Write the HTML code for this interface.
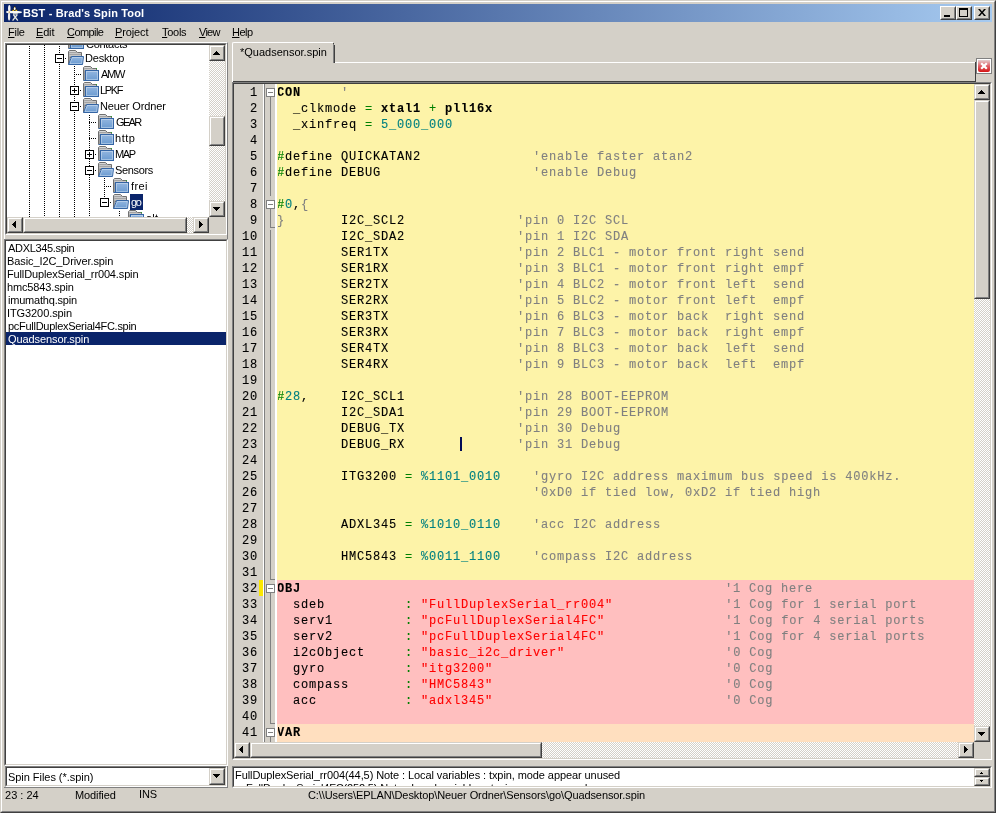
<!DOCTYPE html>
<html><head><meta charset="utf-8"><title>BST - Brad's Spin Tool</title>
<style>
*{box-sizing:border-box;margin:0;padding:0}
html,body{width:996px;height:813px;overflow:hidden;background:#d4d0c8}
body{position:relative;font-family:"Liberation Sans",sans-serif;font-size:11px;color:#000;line-height:13px}
.a{position:absolute}
/* window frame */
#fr1{left:0;top:0;width:996px;height:813px;border:1px solid;border-color:#d4d0c8 #404040 #404040 #d4d0c8}
#fr2{left:1px;top:1px;width:994px;height:811px;border:1px solid;border-color:#fff #808080 #808080 #fff}
#title{left:4px;top:4px;width:988px;height:18px;background:linear-gradient(to right,#0a246a 0%,#a6caf0 100%)}
#ttext{left:23px;top:6px;color:#fff;font-weight:bold;font-size:11px;line-height:14px;white-space:nowrap}
.tb{position:absolute;top:6px;width:16px;height:14px;background:#d4d0c8;border:1px solid;border-color:#fff #404040 #404040 #fff}
.tb:before{content:"";position:absolute;left:0;top:0;right:0;bottom:0;border:1px solid;border-color:#d4d0c8 #808080 #808080 #d4d0c8}
.mi{position:absolute;top:26px;line-height:13px;white-space:nowrap}
.mi u{text-decoration:underline}
/* sunken box */
.sunk{position:absolute;border:1px solid;border-color:#808080 #fff #fff #808080;background:#fff}
.sunk:before{content:"";position:absolute;left:0;top:0;right:0;bottom:0;border:1px solid;border-color:#404040 #d4d0c8 #d4d0c8 #404040;pointer-events:none;z-index:5}
.in{position:absolute;left:1px;top:1px;right:1px;bottom:1px;overflow:hidden}
/* scrollbars */
.sb{position:absolute;background-color:#fff;background-image:linear-gradient(45deg,#d4d0c8 25%,transparent 25%,transparent 75%,#d4d0c8 75%),linear-gradient(45deg,#d4d0c8 25%,transparent 25%,transparent 75%,#d4d0c8 75%);background-size:2px 2px;background-position:0 0,1px 1px}
.btn{position:absolute;background:#d4d0c8;border:1px solid;border-color:#d4d0c8 #404040 #404040 #d4d0c8}
.btn:before{content:"";position:absolute;left:0;top:0;right:0;bottom:0;border:1px solid;border-color:#fff #808080 #808080 #fff}
.ar{position:absolute;width:0;height:0;border:4px solid transparent}
.ar.up{border-top:0;border-bottom:4px solid #000;left:4px;top:5px}
.ar.dn{border-bottom:0;border-top:4px solid #000;left:4px;top:6px}
.ar.lf{border-left:0;border-right:4px solid #000;left:5px;top:4px}
.ar.rt{border-right:0;border-left:4px solid #000;left:6px;top:4px}
/* tree */
.ic{position:absolute}
.tl{position:absolute;height:13px;line-height:13px;padding:0 2px;white-space:nowrap}
.tl.sel{background:#0a246a;color:#fff}
.bx{position:absolute;width:9px;height:9px;border:1px solid #000;background:#fff}
.bx .h{position:absolute;left:1px;top:3px;width:5px;height:1px;background:#000}
.bx .v{position:absolute;left:3px;top:1px;width:1px;height:5px;background:#000}
.hd{position:absolute;height:1px;background-image:linear-gradient(to right,#000 50%,transparent 50%);background-size:2px 1px}
.vd{position:absolute;width:1px;background-image:linear-gradient(to bottom,#000 50%,transparent 50%);background-size:1px 2px}
/* file list */
.fl{position:absolute;left:0;width:100%;height:13px;line-height:13px;padding-left:1px;white-space:nowrap}
.fl.sel{background:#0a246a;color:#fff}
/* editor */
#code{position:absolute;left:45px;top:0;width:700px;height:656px;background:#fdf3a8}
.ln{position:absolute;left:-1px;height:16px;line-height:16px;padding-top:1px;will-change:transform;white-space:pre;font-family:"Liberation Mono",monospace;font-size:12px;letter-spacing:0.8px;color:#000;-webkit-text-stroke:0.12px}
.no{position:absolute;left:0;width:24px;height:16px;line-height:16px;padding-top:1px;will-change:transform;text-align:right;font-family:"Liberation Mono",monospace;font-size:12px;letter-spacing:0.8px;color:#000;-webkit-text-stroke:0.12px}
.k{font-weight:bold}
.c{color:#808080}
.o{color:#008000}
.t{color:#008080}
.s{color:#ff0000}
.fb{position:absolute;left:32px;width:9px;height:9px;border:1px solid #808080;background:#fff}
.fb i{position:absolute;left:1px;top:3px;width:5px;height:1px;background:#808080}
.tx{position:absolute;height:13px;line-height:13px;white-space:pre;font-size:11px;will-change:transform}
</style></head><body>
<svg width="0" height="0" style="position:absolute"><defs><linearGradient id="gb" x1="0" y1="0" x2="0" y2="1"><stop offset="0" stop-color="#93b6df"/><stop offset="1" stop-color="#6b9bd1"/></linearGradient></defs></svg>
<div class="a" id="fr1"></div><div class="a" id="fr2"></div>
<div class="a" id="title"></div>
<svg class="a" style="left:4px;top:4px" width="20" height="18" viewBox="4 4 20 18">
<ellipse cx="9.3" cy="8.6" rx="1.25" ry="3.6" fill="#f4f4f4"/>
<ellipse cx="9.1" cy="16.6" rx="1.15" ry="4.1" fill="#ececec"/>
<path d="M6 12Q6 11 8 11H18Q22 11.2 22 12.2Q22 13 19 13.2H8Q6 13 6 12Z" fill="#fbfbf6"/>
<path d="M12.8 13.2H18L17.2 14.6H13.4Z" fill="#e8e8e0"/>
<path d="M13.3 14.5L17.8 20.6M17.3 14.5L12.6 20.6" stroke="#e6e6de" stroke-width="1.3" fill="none"/>
<path d="M14.7 5.6L17.4 10.6H12Z" fill="#101010"/>
<ellipse cx="14.7" cy="8.6" rx="0.95" ry="1.7" fill="#fff"/>
<rect x="12.4" y="9.8" width="1.8" height="1.2" fill="#f0c020"/><rect x="15.4" y="9.8" width="1.8" height="1.2" fill="#f0c020"/>
<rect x="14.2" y="6.8" width="1" height="0.8" fill="#e8b020"/>
<circle cx="9.3" cy="12.1" r="0.9" fill="#d8b070"/>
</svg>
<div class="tx" style="left:23px;top:7px;letter-spacing:0.152px;color:#fff;font-weight:bold">BST - Brad's Spin Tool</div>
<div class="tb" style="left:940px"><div class="a" style="left:3px;top:8px;width:6px;height:2px;background:#000"></div></div>
<div class="tb" style="left:956px"><div class="a" style="left:2px;top:1px;width:9px;height:9px;border:1px solid #000;border-top-width:2px"></div></div>
<div class="tb" style="left:974px"><svg class="a" style="left:3px;top:2px" width="8" height="7" viewBox="0 0 8 7"><path d="M0 0h2l2 2.5L6 0h2L5 3.5L8 7H6L4 4.5L2 7H0l3-3.5Z" fill="#000"/></svg></div>
<!-- menu -->
<div class="tx" style="left:8px;top:26px;letter-spacing:-0.267px;"><u>F</u>ile</div>
<div class="tx" style="left:36px;top:26px;letter-spacing:-0.167px;"><u>E</u>dit</div>
<div class="tx" style="left:67px;top:26px;letter-spacing:-0.583px;"><u>C</u>ompile</div>
<div class="tx" style="left:115px;top:26px;letter-spacing:-0.117px;"><u>P</u>roject</div>
<div class="tx" style="left:162px;top:26px;letter-spacing:-0.275px;"><u>T</u>ools</div>
<div class="tx" style="left:199px;top:26px;letter-spacing:-0.733px;"><u>V</u>iew</div>
<div class="tx" style="left:232px;top:26px;letter-spacing:-0.533px;"><u>H</u>elp</div>

<!-- tree panel -->
<div class="a" style="left:4px;top:42px;width:224px;height:197px;border-left:1px solid #fff;border-top:1px solid #fff;border-right:1px solid #808080"></div>
<div class="sunk" style="left:5px;top:43px;width:222px;height:192px"><div class="in" id="tree">
<div class="vd" style="left:22px;top:0;height:172px;background-position:0 1px"></div>
<div class="vd" style="left:37px;top:0;height:172px"></div>
<div class="vd" style="left:52px;top:0;height:172px;background-position:0 1px"></div>
<div class="vd" style="left:67px;top:21px;height:151px"></div>
<div class="vd" style="left:82px;top:69px;height:103px;background-position:0 1px"></div>
<div class="vd" style="left:97px;top:133px;height:20px"></div>
<div class="vd" style="left:112px;top:165px;height:7px;background-position:0 1px"></div>
<svg class="ic" style="left:61px;top:-11px" width="16" height="16" viewBox="0 0 16 16">
<path d="M0.5 14.5V1.5L1.5 0.5H7.5L9.5 2.5H13.5V5.5H0.5" fill="#b8b8b8" stroke="#707070"/>
<path d="M1.5 1.5H7.5" stroke="#d8d8d8"/><path d="M1.5 2.5H8.5M1.5 4.5H3" stroke="#a4a4a4"/><path d="M1.5 3.5H13" stroke="#c8c8c8"/>
<path d="M1.5 5V14" stroke="#9c9c9c"/>
<rect x="13" y="2" width="1" height="1" fill="#2ea82e"/>
<rect x="2.5" y="4.5" width="13" height="10" fill="url(#gb)" stroke="#3465a4"/>
<rect x="3.5" y="5.5" width="11" height="8" fill="none" stroke="#fff" stroke-opacity="0.35"/>
<path d="M0.5 14.5H15.5" stroke="#3465a4"/>
</svg>
<div class="tx" style="left:79px;top:-7px;letter-spacing:-0.286px;">Contacts</div>
<div class="hd" style="left:52px;top:-3px;width:8px"></div>
<svg class="ic" style="left:61px;top:5px" width="16" height="16" viewBox="0 0 16 16">
<path d="M0.5 14.5V1.5L1.5 0.5H7.5L9.5 2.5H13.5V7.5H0.5" fill="#b8b8b8" stroke="#707070"/>
<path d="M1.5 1.5H7.5" stroke="#d8d8d8"/><path d="M1.5 2.5H8.5M1.5 4.5H13M1.5 6.5H3" stroke="#a4a4a4"/><path d="M1.5 3.5H13M1.5 5.5H13" stroke="#c8c8c8"/>
<path d="M1.5 7V13" stroke="#9c9c9c"/>
<path d="M3.5 6.5H15.5L14.5 14.5H0.5L2 11Z" fill="url(#gb)" stroke="#3465a4"/>
<path d="M4.3 7.5H14.4L13.6 13.5H2L2.9 11Z" fill="none" stroke="#fff" stroke-opacity="0.35"/>
</svg>
<div class="tx" style="left:78px;top:7px;letter-spacing:-0.183px;">Desktop</div>
<div class="bx" style="left:48px;top:9px"><i class="h"></i></div>
<div class="hd" style="left:58px;top:13px;width:2px"></div>
<svg class="ic" style="left:76px;top:21px" width="16" height="16" viewBox="0 0 16 16">
<path d="M0.5 14.5V1.5L1.5 0.5H7.5L9.5 2.5H13.5V5.5H0.5" fill="#b8b8b8" stroke="#707070"/>
<path d="M1.5 1.5H7.5" stroke="#d8d8d8"/><path d="M1.5 2.5H8.5M1.5 4.5H3" stroke="#a4a4a4"/><path d="M1.5 3.5H13" stroke="#c8c8c8"/>
<path d="M1.5 5V14" stroke="#9c9c9c"/>
<rect x="13" y="2" width="1" height="1" fill="#2ea82e"/>
<rect x="2.5" y="4.5" width="13" height="10" fill="url(#gb)" stroke="#3465a4"/>
<rect x="3.5" y="5.5" width="11" height="8" fill="none" stroke="#fff" stroke-opacity="0.35"/>
<path d="M0.5 14.5H15.5" stroke="#3465a4"/>
</svg>
<div class="tx" style="left:94px;top:23px;letter-spacing:-1.300px;">AMW</div>
<div class="hd" style="left:67px;top:29px;width:8px"></div>
<svg class="ic" style="left:76px;top:37px" width="16" height="16" viewBox="0 0 16 16">
<path d="M0.5 14.5V1.5L1.5 0.5H7.5L9.5 2.5H13.5V5.5H0.5" fill="#b8b8b8" stroke="#707070"/>
<path d="M1.5 1.5H7.5" stroke="#d8d8d8"/><path d="M1.5 2.5H8.5M1.5 4.5H3" stroke="#a4a4a4"/><path d="M1.5 3.5H13" stroke="#c8c8c8"/>
<path d="M1.5 5V14" stroke="#9c9c9c"/>
<rect x="13" y="2" width="1" height="1" fill="#2ea82e"/>
<rect x="2.5" y="4.5" width="13" height="10" fill="url(#gb)" stroke="#3465a4"/>
<rect x="3.5" y="5.5" width="11" height="8" fill="none" stroke="#fff" stroke-opacity="0.35"/>
<path d="M0.5 14.5H15.5" stroke="#3465a4"/>
</svg>
<div class="tx" style="left:93px;top:39px;letter-spacing:-1.333px;">LPKF</div>
<div class="bx" style="left:63px;top:41px"><i class="h"></i><i class="v"></i></div>
<div class="hd" style="left:73px;top:45px;width:2px"></div>
<svg class="ic" style="left:76px;top:53px" width="16" height="16" viewBox="0 0 16 16">
<path d="M0.5 14.5V1.5L1.5 0.5H7.5L9.5 2.5H13.5V7.5H0.5" fill="#b8b8b8" stroke="#707070"/>
<path d="M1.5 1.5H7.5" stroke="#d8d8d8"/><path d="M1.5 2.5H8.5M1.5 4.5H13M1.5 6.5H3" stroke="#a4a4a4"/><path d="M1.5 3.5H13M1.5 5.5H13" stroke="#c8c8c8"/>
<path d="M1.5 7V13" stroke="#9c9c9c"/>
<path d="M3.5 6.5H15.5L14.5 14.5H0.5L2 11Z" fill="url(#gb)" stroke="#3465a4"/>
<path d="M4.3 7.5H14.4L13.6 13.5H2L2.9 11Z" fill="none" stroke="#fff" stroke-opacity="0.35"/>
</svg>
<div class="tx" style="left:93px;top:55px;letter-spacing:-0.118px;">Neuer Ordner</div>
<div class="bx" style="left:63px;top:57px"><i class="h"></i></div>
<div class="hd" style="left:73px;top:61px;width:2px"></div>
<svg class="ic" style="left:91px;top:69px" width="16" height="16" viewBox="0 0 16 16">
<path d="M0.5 14.5V1.5L1.5 0.5H7.5L9.5 2.5H13.5V5.5H0.5" fill="#b8b8b8" stroke="#707070"/>
<path d="M1.5 1.5H7.5" stroke="#d8d8d8"/><path d="M1.5 2.5H8.5M1.5 4.5H3" stroke="#a4a4a4"/><path d="M1.5 3.5H13" stroke="#c8c8c8"/>
<path d="M1.5 5V14" stroke="#9c9c9c"/>
<rect x="13" y="2" width="1" height="1" fill="#2ea82e"/>
<rect x="2.5" y="4.5" width="13" height="10" fill="url(#gb)" stroke="#3465a4"/>
<rect x="3.5" y="5.5" width="11" height="8" fill="none" stroke="#fff" stroke-opacity="0.35"/>
<path d="M0.5 14.5H15.5" stroke="#3465a4"/>
</svg>
<div class="tx" style="left:109px;top:71px;letter-spacing:-1.667px;">GEAR</div>
<div class="hd" style="left:82px;top:77px;width:8px"></div>
<svg class="ic" style="left:91px;top:85px" width="16" height="16" viewBox="0 0 16 16">
<path d="M0.5 14.5V1.5L1.5 0.5H7.5L9.5 2.5H13.5V5.5H0.5" fill="#b8b8b8" stroke="#707070"/>
<path d="M1.5 1.5H7.5" stroke="#d8d8d8"/><path d="M1.5 2.5H8.5M1.5 4.5H3" stroke="#a4a4a4"/><path d="M1.5 3.5H13" stroke="#c8c8c8"/>
<path d="M1.5 5V14" stroke="#9c9c9c"/>
<rect x="13" y="2" width="1" height="1" fill="#2ea82e"/>
<rect x="2.5" y="4.5" width="13" height="10" fill="url(#gb)" stroke="#3465a4"/>
<rect x="3.5" y="5.5" width="11" height="8" fill="none" stroke="#fff" stroke-opacity="0.35"/>
<path d="M0.5 14.5H15.5" stroke="#3465a4"/>
</svg>
<div class="tx" style="left:108px;top:87px;letter-spacing:0.533px;">http</div>
<div class="hd" style="left:82px;top:93px;width:8px"></div>
<svg class="ic" style="left:91px;top:101px" width="16" height="16" viewBox="0 0 16 16">
<path d="M0.5 14.5V1.5L1.5 0.5H7.5L9.5 2.5H13.5V5.5H0.5" fill="#b8b8b8" stroke="#707070"/>
<path d="M1.5 1.5H7.5" stroke="#d8d8d8"/><path d="M1.5 2.5H8.5M1.5 4.5H3" stroke="#a4a4a4"/><path d="M1.5 3.5H13" stroke="#c8c8c8"/>
<path d="M1.5 5V14" stroke="#9c9c9c"/>
<rect x="13" y="2" width="1" height="1" fill="#2ea82e"/>
<rect x="2.5" y="4.5" width="13" height="10" fill="url(#gb)" stroke="#3465a4"/>
<rect x="3.5" y="5.5" width="11" height="8" fill="none" stroke="#fff" stroke-opacity="0.35"/>
<path d="M0.5 14.5H15.5" stroke="#3465a4"/>
</svg>
<div class="tx" style="left:108px;top:103px;letter-spacing:-1.350px;">MAP</div>
<div class="bx" style="left:78px;top:105px"><i class="h"></i><i class="v"></i></div>
<div class="hd" style="left:88px;top:109px;width:2px"></div>
<svg class="ic" style="left:91px;top:117px" width="16" height="16" viewBox="0 0 16 16">
<path d="M0.5 14.5V1.5L1.5 0.5H7.5L9.5 2.5H13.5V7.5H0.5" fill="#b8b8b8" stroke="#707070"/>
<path d="M1.5 1.5H7.5" stroke="#d8d8d8"/><path d="M1.5 2.5H8.5M1.5 4.5H13M1.5 6.5H3" stroke="#a4a4a4"/><path d="M1.5 3.5H13M1.5 5.5H13" stroke="#c8c8c8"/>
<path d="M1.5 7V13" stroke="#9c9c9c"/>
<path d="M3.5 6.5H15.5L14.5 14.5H0.5L2 11Z" fill="url(#gb)" stroke="#3465a4"/>
<path d="M4.3 7.5H14.4L13.6 13.5H2L2.9 11Z" fill="none" stroke="#fff" stroke-opacity="0.35"/>
</svg>
<div class="tx" style="left:108px;top:119px;letter-spacing:-0.350px;">Sensors</div>
<div class="bx" style="left:78px;top:121px"><i class="h"></i></div>
<div class="hd" style="left:88px;top:125px;width:2px"></div>
<svg class="ic" style="left:106px;top:133px" width="16" height="16" viewBox="0 0 16 16">
<path d="M0.5 14.5V1.5L1.5 0.5H7.5L9.5 2.5H13.5V5.5H0.5" fill="#b8b8b8" stroke="#707070"/>
<path d="M1.5 1.5H7.5" stroke="#d8d8d8"/><path d="M1.5 2.5H8.5M1.5 4.5H3" stroke="#a4a4a4"/><path d="M1.5 3.5H13" stroke="#c8c8c8"/>
<path d="M1.5 5V14" stroke="#9c9c9c"/>
<rect x="13" y="2" width="1" height="1" fill="#2ea82e"/>
<rect x="2.5" y="4.5" width="13" height="10" fill="url(#gb)" stroke="#3465a4"/>
<rect x="3.5" y="5.5" width="11" height="8" fill="none" stroke="#fff" stroke-opacity="0.35"/>
<path d="M0.5 14.5H15.5" stroke="#3465a4"/>
</svg>
<div class="tx" style="left:124px;top:135px;letter-spacing:0.367px;">frei</div>
<div class="hd" style="left:97px;top:141px;width:8px"></div>
<svg class="ic" style="left:106px;top:149px" width="16" height="16" viewBox="0 0 16 16">
<path d="M0.5 14.5V1.5L1.5 0.5H7.5L9.5 2.5H13.5V7.5H0.5" fill="#b8b8b8" stroke="#707070"/>
<path d="M1.5 1.5H7.5" stroke="#d8d8d8"/><path d="M1.5 2.5H8.5M1.5 4.5H13M1.5 6.5H3" stroke="#a4a4a4"/><path d="M1.5 3.5H13M1.5 5.5H13" stroke="#c8c8c8"/>
<path d="M1.5 7V13" stroke="#9c9c9c"/>
<path d="M3.5 6.5H15.5L14.5 14.5H0.5L2 11Z" fill="url(#gb)" stroke="#3465a4"/>
<path d="M4.3 7.5H14.4L13.6 13.5H2L2.9 11Z" fill="none" stroke="#fff" stroke-opacity="0.35"/>
</svg>
<div class="a" style="left:123px;top:149px;width:13px;height:16px;background:#0a246a"></div>
<div class="tx" style="left:124px;top:151px;letter-spacing:-1.300px;color:#fff">go</div>
<div class="bx" style="left:93px;top:153px"><i class="h"></i></div>
<div class="hd" style="left:103px;top:157px;width:2px"></div>
<svg class="ic" style="left:121px;top:165px" width="16" height="16" viewBox="0 0 16 16">
<path d="M0.5 14.5V1.5L1.5 0.5H7.5L9.5 2.5H13.5V5.5H0.5" fill="#b8b8b8" stroke="#707070"/>
<path d="M1.5 1.5H7.5" stroke="#d8d8d8"/><path d="M1.5 2.5H8.5M1.5 4.5H3" stroke="#a4a4a4"/><path d="M1.5 3.5H13" stroke="#c8c8c8"/>
<path d="M1.5 5V14" stroke="#9c9c9c"/>
<rect x="13" y="2" width="1" height="1" fill="#2ea82e"/>
<rect x="2.5" y="4.5" width="13" height="10" fill="url(#gb)" stroke="#3465a4"/>
<rect x="3.5" y="5.5" width="11" height="8" fill="none" stroke="#fff" stroke-opacity="0.35"/>
<path d="M0.5 14.5H15.5" stroke="#3465a4"/>
</svg>
<div class="tx" style="left:139px;top:167px;letter-spacing:0.250px;">alt</div>
<div class="hd" style="left:112px;top:173px;width:8px"></div>
<div class="sb" style="left:202px;top:0;width:16px;height:172px">
 <div class="btn" style="left:0;top:0;width:16px;height:16px"><div class="a" style="left:2px;top:4px;width:1px;height:1px;box-shadow:4px 1px 0 #000,3px 2px 0 #000,4px 2px 0 #000,5px 2px 0 #000,2px 3px 0 #000,3px 3px 0 #000,4px 3px 0 #000,5px 3px 0 #000,6px 3px 0 #000,1px 4px 0 #000,2px 4px 0 #000,3px 4px 0 #000,4px 4px 0 #000,5px 4px 0 #000,6px 4px 0 #000,7px 4px 0 #000"></div></div>
 <div class="btn" style="left:0;top:71px;width:16px;height:30px"></div>
 <div class="btn" style="left:0;top:156px;width:16px;height:16px"><div class="a" style="left:2px;top:4px;width:1px;height:1px;box-shadow:4px 4px 0 #000,3px 3px 0 #000,4px 3px 0 #000,5px 3px 0 #000,2px 2px 0 #000,3px 2px 0 #000,4px 2px 0 #000,5px 2px 0 #000,6px 2px 0 #000,1px 1px 0 #000,2px 1px 0 #000,3px 1px 0 #000,4px 1px 0 #000,5px 1px 0 #000,6px 1px 0 #000,7px 1px 0 #000"></div></div>
</div>
<div class="sb" style="left:0;top:172px;width:202px;height:16px">
 <div class="btn" style="left:0;top:0;width:16px;height:16px"><div class="a" style="left:3px;top:2px;width:1px;height:1px;box-shadow:1px 4px 0 #000,2px 3px 0 #000,2px 4px 0 #000,2px 5px 0 #000,3px 2px 0 #000,3px 3px 0 #000,3px 4px 0 #000,3px 5px 0 #000,3px 6px 0 #000,4px 1px 0 #000,4px 2px 0 #000,4px 3px 0 #000,4px 4px 0 #000,4px 5px 0 #000,4px 6px 0 #000,4px 7px 0 #000"></div></div>
 <div class="btn" style="left:16px;top:0;width:164px;height:16px"></div>
 <div class="btn" style="left:186px;top:0;width:16px;height:16px"><div class="a" style="left:4px;top:2px;width:1px;height:1px;box-shadow:4px 4px 0 #000,3px 3px 0 #000,3px 4px 0 #000,3px 5px 0 #000,2px 2px 0 #000,2px 3px 0 #000,2px 4px 0 #000,2px 5px 0 #000,2px 6px 0 #000,1px 1px 0 #000,1px 2px 0 #000,1px 3px 0 #000,1px 4px 0 #000,1px 5px 0 #000,1px 6px 0 #000,1px 7px 0 #000"></div></div>
</div>
<div class="a" style="left:202px;top:172px;width:16px;height:16px;background:#d4d0c8"></div>
</div></div>

<!-- file list -->
<div class="sunk" style="left:4px;top:239px;width:224px;height:527px"><div class="in">
<div class="fl sel" style="top:91px"></div>
<div class="tx" style="left:2px;top:1px;letter-spacing:-0.327px;">ADXL345.spin</div>
<div class="tx" style="left:1px;top:14px;letter-spacing:-0.095px;">Basic_I2C_Driver.spin</div>
<div class="tx" style="left:1px;top:27px;letter-spacing:-0.138px;">FullDuplexSerial_rr004.spin</div>
<div class="tx" style="left:1px;top:40px;letter-spacing:-0.145px;">hmc5843.spin</div>
<div class="tx" style="left:2px;top:53px;letter-spacing:-0.208px;">imumathq.spin</div>
<div class="tx" style="left:1px;top:66px;letter-spacing:-0.091px;">ITG3200.spin</div>
<div class="tx" style="left:2px;top:79px;letter-spacing:-0.280px;">pcFullDuplexSerial4FC.spin</div>
<div class="tx" style="left:2px;top:92px;letter-spacing:-0.093px;color:#fff">Quadsensor.spin</div>
</div></div>

<!-- combo -->
<div class="a" style="left:4px;top:766px;width:224px;height:22px;border-right:1px solid #808080;border-bottom:1px solid #808080"></div>
<div class="sunk" style="left:5px;top:766px;width:222px;height:21px"><div class="in">
<div class="tx" style="left:1px;top:3px;letter-spacing:-0.044px;">Spin Files (*.spin)</div>
<div class="btn" style="left:202px;top:0;width:16px;height:17px"><div class="a" style="left:2px;top:4px;width:1px;height:1px;box-shadow:4px 4px 0 #000,3px 3px 0 #000,4px 3px 0 #000,5px 3px 0 #000,2px 2px 0 #000,3px 2px 0 #000,4px 2px 0 #000,5px 2px 0 #000,6px 2px 0 #000,1px 1px 0 #000,2px 1px 0 #000,3px 1px 0 #000,4px 1px 0 #000,5px 1px 0 #000,6px 1px 0 #000,7px 1px 0 #000"></div></div>
</div></div>

<!-- tab -->
<div class="a" style="left:335px;top:62px;width:640px;height:1px;background:#fff"></div>
<div class="a" style="left:975px;top:62px;width:1px;height:20px;background:#404040"></div>
<div class="a" style="left:233px;top:81px;width:743px;height:1px;background:#404040"></div>
<div class="a" style="left:232px;top:63px;width:1px;height:19px;background:#fff"></div>
<div class="a" id="tab" style="left:232px;top:42px;width:101px;height:21px;border-top:1px solid #fff;border-left:1px solid #fff;border-radius:2px 0 0 0"></div>
<div class="a" style="left:333px;top:44px;width:1px;height:19px;background:#808080"></div>
<div class="a" style="left:334px;top:45px;width:1px;height:18px;background:#404040"></div>
<div class="a" style="left:333px;top:43px;width:1px;height:1px;background:#404040"></div>
<div class="tx" style="left:240px;top:46px;letter-spacing:0.000px;">*Quadsensor.spin</div>
<!-- red close -->
<div class="a" style="left:976px;top:58px;width:16px;height:16px;border:1px solid #808080;background:#fff;padding:1px">
<div style="width:12px;height:12px;background:linear-gradient(to bottom,#e4d0d0 0%,#e06068 50%,#d41414 100%);border-radius:0 0 2px 2px;position:relative">
<svg class="a" style="left:2px;top:2px" width="8" height="8" viewBox="0 0 8 8"><path d="M1.2 1.2L6.8 6.8M6.8 1.2L1.2 6.8" stroke="#fff" stroke-width="2.2"/></svg></div></div>

<!-- editor -->
<div class="sunk" style="left:232px;top:82px;width:760px;height:678px;background:#d4d0c8"><div class="in">
<div class="a" style="left:0;top:0;width:29px;height:658px;background:#d4d0c8"></div>
<div class="a" style="left:29px;top:0;width:1px;height:658px;background:#fff"></div>
<div class="a" style="left:30px;top:0;width:1px;height:658px;background:#808080"></div>
<div class="a" style="left:31px;top:0;width:10px;height:658px;background:#d4d0c8"></div>
<div class="a" style="left:41px;top:0;width:2px;height:658px;background:#fff"></div>
<div class="a" style="left:43px;top:0;width:697px;height:496px;background:#fdf3a8"></div>
<div class="a" style="left:43px;top:496px;width:697px;height:144px;background:#ffbfbf"></div>
<div class="a" style="left:43px;top:640px;width:697px;height:18px;background:#ffdfbf"></div>
<!-- fold lines -->
<div class="a" style="left:36px;top:13px;width:1px;height:99px;background:#808080"></div>
<div class="a" style="left:36px;top:125px;width:1px;height:19px;background:#808080"></div>
<div class="a" style="left:36px;top:143px;width:5px;height:1px;background:#808080"></div>
<div class="a" style="left:36px;top:146px;width:1px;height:350px;background:#808080"></div>
<div class="a" style="left:36px;top:495px;width:5px;height:1px;background:#808080"></div>
<div class="a" style="left:36px;top:509px;width:1px;height:131px;background:#808080"></div>
<div class="a" style="left:36px;top:639px;width:5px;height:1px;background:#808080"></div>
<div class="a" style="left:36px;top:653px;width:1px;height:5px;background:#808080"></div>
<div class="fb" style="top:4px"><i></i></div>
<div class="fb" style="top:116px"><i></i></div>
<div class="fb" style="top:500px"><i></i></div>
<div class="fb" style="top:644px"><i></i></div>
<div class="a" style="left:25px;top:496px;width:4px;height:16px;background:#fce800"></div>
<div class="a" id="nums" style="left:0;top:0;width:26px;height:658px;overflow:hidden"><div class="no" style="top:0px">1</div>
<div class="no" style="top:16px">2</div>
<div class="no" style="top:32px">3</div>
<div class="no" style="top:48px">4</div>
<div class="no" style="top:64px">5</div>
<div class="no" style="top:80px">6</div>
<div class="no" style="top:96px">7</div>
<div class="no" style="top:112px">8</div>
<div class="no" style="top:128px">9</div>
<div class="no" style="top:144px">10</div>
<div class="no" style="top:160px">11</div>
<div class="no" style="top:176px">12</div>
<div class="no" style="top:192px">13</div>
<div class="no" style="top:208px">14</div>
<div class="no" style="top:224px">15</div>
<div class="no" style="top:240px">16</div>
<div class="no" style="top:256px">17</div>
<div class="no" style="top:272px">18</div>
<div class="no" style="top:288px">19</div>
<div class="no" style="top:304px">20</div>
<div class="no" style="top:320px">21</div>
<div class="no" style="top:336px">22</div>
<div class="no" style="top:352px">23</div>
<div class="no" style="top:368px">24</div>
<div class="no" style="top:384px">25</div>
<div class="no" style="top:400px">26</div>
<div class="no" style="top:416px">27</div>
<div class="no" style="top:432px">28</div>
<div class="no" style="top:448px">29</div>
<div class="no" style="top:464px">30</div>
<div class="no" style="top:480px">31</div>
<div class="no" style="top:496px">32</div>
<div class="no" style="top:512px">33</div>
<div class="no" style="top:528px">34</div>
<div class="no" style="top:544px">35</div>
<div class="no" style="top:560px">36</div>
<div class="no" style="top:576px">37</div>
<div class="no" style="top:592px">38</div>
<div class="no" style="top:608px">39</div>
<div class="no" style="top:624px">40</div>
<div class="no" style="top:640px">41</div></div>
<div class="a" id="codewrap" style="left:44px;top:0;width:696px;height:658px;overflow:hidden"><div class="ln" style="top:0px"><span class="k">CON</span><span class="n">     </span><span class="c">'</span></div>
<div class="ln" style="top:16px"><span class="n">  _clkmode </span><span class="o">=</span><span class="n"> </span><span class="k">xtal1</span><span class="n"> </span><span class="o">+</span><span class="n"> </span><span class="k">pll16x</span></div>
<div class="ln" style="top:32px"><span class="n">  _xinfreq </span><span class="o">=</span><span class="n"> </span><span class="t">5_000_000</span></div>
<div class="ln" style="top:48px"></div>
<div class="ln" style="top:64px"><span class="o">#</span><span class="n">define QUICKATAN2</span><span class="n">              </span><span class="c">'enable faster atan2</span></div>
<div class="ln" style="top:80px"><span class="o">#</span><span class="n">define DEBUG</span><span class="n">                   </span><span class="c">'enable Debug</span></div>
<div class="ln" style="top:96px"></div>
<div class="ln" style="top:112px"><span class="o">#</span><span class="t">0</span><span class="n">,</span><span class="c">{</span></div>
<div class="ln" style="top:128px"><span class="c">}</span><span class="n">       I2C_SCL2              </span><span class="c">'pin 0 I2C SCL</span></div>
<div class="ln" style="top:144px"><span class="n">        I2C_SDA2              </span><span class="c">'pin 1 I2C SDA</span></div>
<div class="ln" style="top:160px"><span class="n">        SER1TX                </span><span class="c">'pin 2 BLC1 - motor front right send</span></div>
<div class="ln" style="top:176px"><span class="n">        SER1RX                </span><span class="c">'pin 3 BLC1 - motor front right empf</span></div>
<div class="ln" style="top:192px"><span class="n">        SER2TX                </span><span class="c">'pin 4 BLC2 - motor front left  send</span></div>
<div class="ln" style="top:208px"><span class="n">        SER2RX                </span><span class="c">'pin 5 BLC2 - motor front left  empf</span></div>
<div class="ln" style="top:224px"><span class="n">        SER3TX                </span><span class="c">'pin 6 BLC3 - motor back  right send</span></div>
<div class="ln" style="top:240px"><span class="n">        SER3RX                </span><span class="c">'pin 7 BLC3 - motor back  right empf</span></div>
<div class="ln" style="top:256px"><span class="n">        SER4TX                </span><span class="c">'pin 8 BLC3 - motor back  left  send</span></div>
<div class="ln" style="top:272px"><span class="n">        SER4RX                </span><span class="c">'pin 9 BLC3 - motor back  left  empf</span></div>
<div class="ln" style="top:288px"></div>
<div class="ln" style="top:304px"><span class="o">#</span><span class="t">28</span><span class="n">,    I2C_SCL1              </span><span class="c">'pin 28 BOOT-EEPROM</span></div>
<div class="ln" style="top:320px"><span class="n">        I2C_SDA1              </span><span class="c">'pin 29 BOOT-EEPROM</span></div>
<div class="ln" style="top:336px"><span class="n">        DEBUG_TX              </span><span class="c">'pin 30 Debug</span></div>
<div class="ln" style="top:352px"><span class="n">        DEBUG_RX              </span><span class="c">'pin 31 Debug</span></div>
<div class="ln" style="top:368px"></div>
<div class="ln" style="top:384px"><span class="n">        ITG3200 </span><span class="o">=</span><span class="n"> </span><span class="t">%1101_0010</span><span class="n">    </span><span class="c">'gyro I2C address maximum bus speed is 400kHz.</span></div>
<div class="ln" style="top:400px"><span class="n">                                </span><span class="c">'0xD0 if tied low, 0xD2 if tied high</span></div>
<div class="ln" style="top:416px"></div>
<div class="ln" style="top:432px"><span class="n">        ADXL345 </span><span class="o">=</span><span class="n"> </span><span class="t">%1010_0110</span><span class="n">    </span><span class="c">'acc I2C address</span></div>
<div class="ln" style="top:448px"></div>
<div class="ln" style="top:464px"><span class="n">        HMC5843 </span><span class="o">=</span><span class="n"> </span><span class="t">%0011_1100</span><span class="n">    </span><span class="c">'compass I2C address</span></div>
<div class="ln" style="top:480px"></div>
<div class="ln" style="top:496px"><span class="k">OBJ</span><span class="n">                                                     </span><span class="c">'1 Cog here</span></div>
<div class="ln" style="top:512px"><span class="n">  sdeb          </span><span class="o">:</span><span class="n"> </span><span class="s">"FullDuplexSerial_rr004"</span><span class="n">              </span><span class="c">'1 Cog for 1 serial port</span></div>
<div class="ln" style="top:528px"><span class="n">  serv1         </span><span class="o">:</span><span class="n"> </span><span class="s">"pcFullDuplexSerial4FC"</span><span class="n">               </span><span class="c">'1 Cog for 4 serial ports</span></div>
<div class="ln" style="top:544px"><span class="n">  serv2         </span><span class="o">:</span><span class="n"> </span><span class="s">"pcFullDuplexSerial4FC"</span><span class="n">               </span><span class="c">'1 Cog for 4 serial ports</span></div>
<div class="ln" style="top:560px"><span class="n">  i2cObject     </span><span class="o">:</span><span class="n"> </span><span class="s">"basic_i2c_driver"</span><span class="n">                    </span><span class="c">'0 Cog</span></div>
<div class="ln" style="top:576px"><span class="n">  gyro          </span><span class="o">:</span><span class="n"> </span><span class="s">"itg3200"</span><span class="n">                             </span><span class="c">'0 Cog</span></div>
<div class="ln" style="top:592px"><span class="n">  compass       </span><span class="o">:</span><span class="n"> </span><span class="s">"HMC5843"</span><span class="n">                             </span><span class="c">'0 Cog</span></div>
<div class="ln" style="top:608px"><span class="n">  acc           </span><span class="o">:</span><span class="n"> </span><span class="s">"adxl345"</span><span class="n">                             </span><span class="c">'0 Cog</span></div>
<div class="ln" style="top:624px"></div>
<div class="ln" style="top:640px"><span class="k">VAR</span></div></div>
<div class="a" style="left:226px;top:353px;width:2px;height:14px;background:#020c57"></div>
<!-- scrollbars -->
<div class="sb" style="left:740px;top:0;width:16px;height:658px">
 <div class="btn" style="left:0;top:0;width:16px;height:16px"><div class="a" style="left:2px;top:4px;width:1px;height:1px;box-shadow:4px 1px 0 #000,3px 2px 0 #000,4px 2px 0 #000,5px 2px 0 #000,2px 3px 0 #000,3px 3px 0 #000,4px 3px 0 #000,5px 3px 0 #000,6px 3px 0 #000,1px 4px 0 #000,2px 4px 0 #000,3px 4px 0 #000,4px 4px 0 #000,5px 4px 0 #000,6px 4px 0 #000,7px 4px 0 #000"></div></div>
 <div class="btn" style="left:0;top:16px;width:16px;height:199px"></div>
 <div class="btn" style="left:0;top:642px;width:16px;height:16px"><div class="a" style="left:2px;top:4px;width:1px;height:1px;box-shadow:4px 4px 0 #000,3px 3px 0 #000,4px 3px 0 #000,5px 3px 0 #000,2px 2px 0 #000,3px 2px 0 #000,4px 2px 0 #000,5px 2px 0 #000,6px 2px 0 #000,1px 1px 0 #000,2px 1px 0 #000,3px 1px 0 #000,4px 1px 0 #000,5px 1px 0 #000,6px 1px 0 #000,7px 1px 0 #000"></div></div>
</div>
<div class="sb" style="left:0;top:658px;width:740px;height:16px">
 <div class="btn" style="left:0;top:0;width:16px;height:16px"><div class="a" style="left:3px;top:2px;width:1px;height:1px;box-shadow:1px 4px 0 #000,2px 3px 0 #000,2px 4px 0 #000,2px 5px 0 #000,3px 2px 0 #000,3px 3px 0 #000,3px 4px 0 #000,3px 5px 0 #000,3px 6px 0 #000,4px 1px 0 #000,4px 2px 0 #000,4px 3px 0 #000,4px 4px 0 #000,4px 5px 0 #000,4px 6px 0 #000,4px 7px 0 #000"></div></div>
 <div class="btn" style="left:16px;top:0;width:292px;height:16px"></div>
 <div class="btn" style="left:724px;top:0;width:16px;height:16px"><div class="a" style="left:4px;top:2px;width:1px;height:1px;box-shadow:4px 4px 0 #000,3px 3px 0 #000,3px 4px 0 #000,3px 5px 0 #000,2px 2px 0 #000,2px 3px 0 #000,2px 4px 0 #000,2px 5px 0 #000,2px 6px 0 #000,1px 1px 0 #000,1px 2px 0 #000,1px 3px 0 #000,1px 4px 0 #000,1px 5px 0 #000,1px 6px 0 #000,1px 7px 0 #000"></div></div>
</div>
</div></div>

<!-- output -->
<div class="sunk" style="left:232px;top:766px;width:760px;height:22px"><div class="in">
<div class="tx" style="left:1px;top:1px;letter-spacing:-0.086px;">FullDuplexSerial_rr004(44,5) Note : Local variables : txpin, mode appear unused</div>
<div class="tx" style="left:12px;top:14px;letter-spacing:-0.171px;">FullDuplexSerial4FC(252,5) Note : Local variables : txpin appear unused</div>
<div class="btn" style="left:740px;top:0;width:16px;height:9px"><div class="a" style="left:4px;top:2px;width:1px;height:1px;box-shadow:2px 1px 0 #000,1px 2px 0 #000,2px 2px 0 #000,3px 2px 0 #000"></div></div>
<div class="btn" style="left:740px;top:9px;width:16px;height:9px"><div class="a" style="left:4px;top:1px;width:1px;height:1px;box-shadow:2px 2px 0 #000,1px 1px 0 #000,2px 1px 0 #000,3px 1px 0 #000"></div></div>
</div></div>

<!-- status -->
<div class="tx" style="left:5px;top:789px;letter-spacing:0.017px;">23 : 24</div>
<div class="tx" style="left:75px;top:789px;letter-spacing:-0.114px;">Modified</div>
<div class="tx" style="left:139px;top:788px;letter-spacing:-0.150px;">INS</div>
<div class="tx" style="left:308px;top:789px;letter-spacing:-0.094px;">C:\\Users\EPLAN\Desktop\Neuer Ordner\Sensors\go\Quadsensor.spin</div>
</body></html>
